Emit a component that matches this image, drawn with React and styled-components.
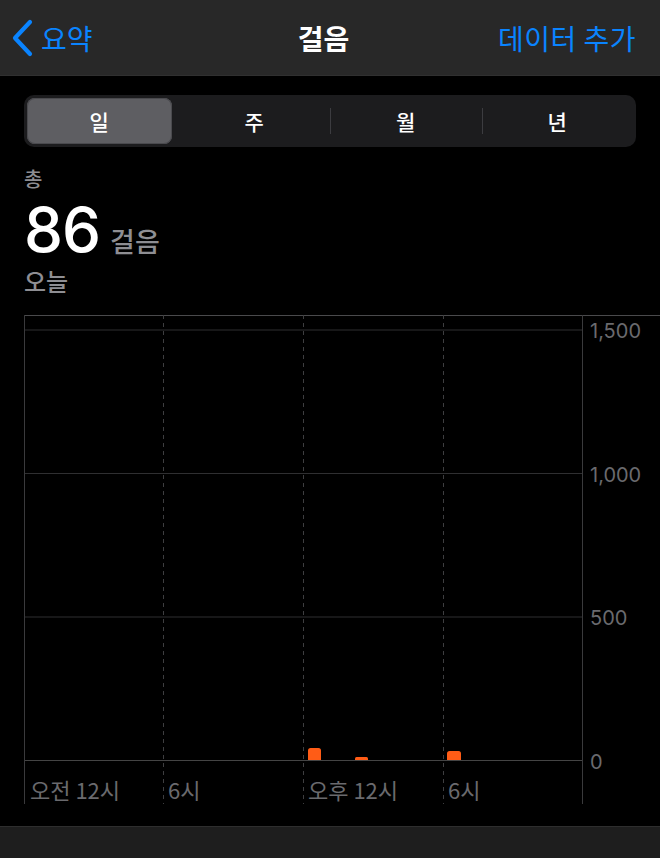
import React from "react";
import styled, { createGlobalStyle } from "styled-components";

const Global = createGlobalStyle`
  html, body { margin: 0; padding: 0; background: #000; }
  body {
    font-family: Inter, "Noto Sans CJK KR", "Noto Sans", sans-serif;
    -webkit-font-smoothing: antialiased;
  }
  #root { width: 660px; height: 858px; overflow: hidden; }
`;

const Page = styled.div`
  width: 660px;
  height: 858px;
  background: #000;
  display: flex;
  flex-direction: column;
`;

const Header = styled.header`
  height: 75px;
  flex: none;
  background: #282828;
  border-bottom: 1px solid #303030;
  display: grid;
  grid-template-columns: 1fr auto 1fr;
  align-items: center;
  padding: 0 24px 0 11px;
  font-family: "Noto Sans CJK KR", sans-serif;
  font-size: 28px;
`;

const Back = styled.div`
  display: flex;
  align-items: center;
  gap: 8px;
  color: #0a84ff;
  justify-self: start;
`;

const Title = styled.div`
  color: #fff;
  font-weight: 700;
`;

const Action = styled.div`
  color: #0a84ff;
  justify-self: end;
  letter-spacing: 0.5px;
`;

const Body = styled.div`
  padding: 19px 24px 0;
  flex: none;
`;

const Segmented = styled.div`
  height: 52px;
  box-sizing: border-box;
  background: #1c1c1e;
  border-radius: 10px;
  padding: 3px;
  display: grid;
  grid-template-columns: repeat(4, 1fr);
  align-items: center;
`;

const Segment = styled.div`
  height: 46px;
  border-radius: 8px;
  display: flex;
  align-items: center;
  justify-content: center;
  position: relative;
  margin-right: ${(p) => (p.$active ? "7px" : "0")};
  font-family: "Noto Sans CJK KR", sans-serif;
  font-size: 21px;
  font-weight: 500;
  color: #fff;
  background: ${(p) => (p.$active ? "#5e5e62" : "transparent")};
  box-shadow: ${(p) => (p.$active ? "0 0 0 1px #4a4a4e inset" : "none")};
  &::before {
    content: "";
    display: ${(p) => (p.$divider ? "block" : "none")};
    position: absolute;
    left: 0;
    top: 10px;
    bottom: 10px;
    width: 1px;
    background: #3c3c40;
  }
`;

const Label = styled.div`
  margin-top: 19px;
  font-family: "Noto Sans CJK KR", sans-serif;
  font-size: 20px;
  line-height: 26px;
  color: #8e8e93;
  font-weight: 500;
`;

const ValueRow = styled.div`
  display: flex;
  align-items: baseline;
  gap: 10px;
  margin-top: 8px;
  height: 60px;
`;

const Value = styled.span`
  font-family: Inter, sans-serif;
  font-size: 62px;
  line-height: 60px;
  color: #fff;
  font-weight: 500;
  letter-spacing: -1px;
`;

const Unit = styled.span`
  font-family: "Noto Sans CJK KR", sans-serif;
  font-size: 27px;
  line-height: 1;
  color: #8e8e93;
  font-weight: 500;
`;

const DateText = styled.div`
  margin-top: 6px;
  font-family: "Noto Sans CJK KR", sans-serif;
  font-size: 24px;
  line-height: 30px;
  color: #8e8e93;
  font-weight: 500;
`;

const ChartWrap = styled.div`
  margin-top: 19px;
  flex: none;
  height: 490px;
`;

const Spacer = styled.div`
  flex: 1;
`;

const TabBar = styled.div`
  height: 31px;
  flex: none;
  background: #1e1e1e;
  border-top: 1px solid #2e2e2e;
`;

const Chevron = () => (
  <svg width="22" height="38" viewBox="0 0 22 38">
    <path d="M19 3 L4 19 L19 35" fill="none" stroke="#0a84ff" strokeWidth="4.2" strokeLinecap="round" strokeLinejoin="round" />
  </svg>
);

const gridY = [
  { y: 15, label: "1,500" },
  { y: 158.5, label: "1,000" },
  { y: 302, label: "500" },
  { y: 445.5, label: "0" },
];

const xLabels = [
  { x: 30, label: "오전 12시" },
  { x: 168, label: "6시" },
  { x: 308, label: "오후 12시" },
  { x: 448, label: "6시" },
];

const bars = [
  { x: 308, w: 13, h: 12 },
  { x: 355, w: 13, h: 3 },
  { x: 447, w: 14, h: 9 },
];

const barPath = ({ x, w, h }) => {
  const r = Math.min(2.5, h / 2);
  const b = 445;
  const t = b - h;
  return `M${x} ${b} L${x} ${t + r} Q${x} ${t} ${x + r} ${t} L${x + w - r} ${t} Q${x + w} ${t} ${x + w} ${t + r} L${x + w} ${b} Z`;
};

const Chart = () => (
  <svg width="660" height="490" viewBox="0 0 660 490" style={{ display: "block" }}>
    <line x1="24" y1="0.5" x2="660" y2="0.5" stroke="#4a4a4c" strokeWidth="1" />
    {gridY.map((g) => (
      <g key={g.label}>
        <line x1="24" y1={g.y} x2="583" y2={g.y} stroke={g.label === "0" ? "#444" : "#2f2f31"} strokeWidth="1" />
        <text x="590" y={g.y + 8} fill="#6a6a6e" fontSize="20" fontFamily="Inter, sans-serif">{g.label}</text>
      </g>
    ))}
    <line x1="24.5" y1="0" x2="24.5" y2="489" stroke="#3a3a3c" strokeWidth="1" />
    <line x1="582.5" y1="0" x2="582.5" y2="489" stroke="#3a3a3c" strokeWidth="1" />
    {[163.5, 303.5, 443.5].map((x) => (
      <line key={x} x1={x} y1="0" x2={x} y2="489" stroke="#3e3e40" strokeWidth="1" strokeDasharray="4 4" />
    ))}
    {bars.map((b) => (
      <path key={b.x} d={barPath(b)} fill="#ff5c16" />
    ))}
    {xLabels.map((l) => (
      <text key={l.x} x={l.x} y="484" fill="#6a6a6e" fontSize="22" fontFamily="'Noto Sans CJK KR', sans-serif">{l.label}</text>
    ))}
  </svg>
);

export default function App() {
  return (
    <Page>
      <Global />
      <Header>
        <Back>
          <Chevron />
          <span>요약</span>
        </Back>
        <Title>걸음</Title>
        <Action>데이터 추가</Action>
      </Header>
      <Body>
        <Segmented>
          <Segment $active>일</Segment>
          <Segment>주</Segment>
          <Segment $divider>월</Segment>
          <Segment $divider>년</Segment>
        </Segmented>
        <Label>총</Label>
        <ValueRow>
          <Value>86</Value>
          <Unit>걸음</Unit>
        </ValueRow>
        <DateText>오늘</DateText>
      </Body>
      <ChartWrap>
        <Chart />
      </ChartWrap>
      <Spacer />
      <TabBar />
    </Page>
  );
}
